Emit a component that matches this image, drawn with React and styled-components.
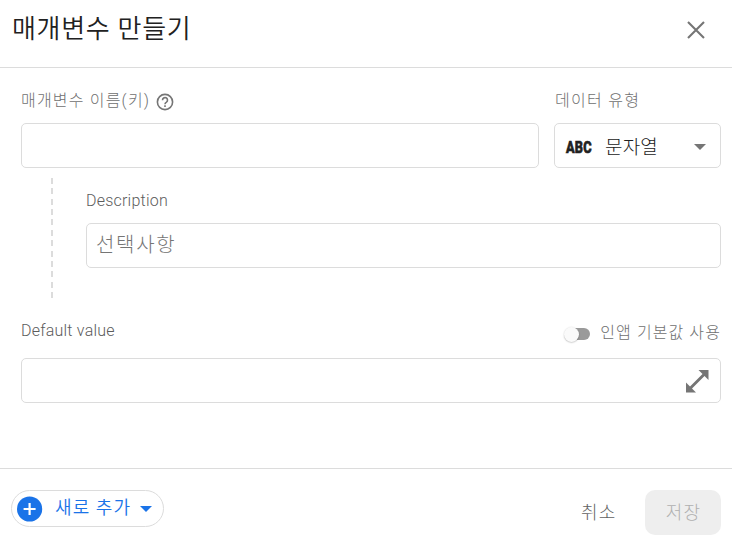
import React from "react";
import styled, { createGlobalStyle } from "styled-components";

const GlobalStyle = createGlobalStyle`
  * { box-sizing: border-box; }
  body {
    margin: 0;
    background: #fff;
    font-family: Roboto, "Noto Sans CJK KR", sans-serif;
    overflow: hidden;
  }
  button { font-family: inherit; margin: 0; padding: 0; border: 0; background: none; }
  input { font-family: inherit; }
`;

const Dialog = styled.div`
  width: 732px;
  height: 546px;
  display: flex;
  flex-direction: column;
  background: #fff;
`;

const Header = styled.header`
  height: 68px;
  flex: none;
  display: flex;
  justify-content: space-between;
  align-items: flex-start;
  padding: 9px 26px 0 12px;
  border-bottom: 1px solid #dcdcdc;
`;

const Title = styled.h1`
  margin: 0;
  font-size: 26px;
  line-height: 40px;
  font-weight: 350;
  letter-spacing: 0.7px;
  color: #212121;
`;

const CloseButton = styled.button`
  width: 20px;
  height: 20px;
  margin-top: 11px;
  display: flex;
`;

const Body = styled.main`
  height: 400px;
  flex: none;
  padding: 21px 11px 0 21px;
`;

const FieldRow = styled.div`
  display: grid;
  grid-template-columns: 518px 167px;
  column-gap: 15px;
`;

const Field = styled.div`
  display: flex;
  flex-direction: column;
`;

const LabelRow = styled.div`
  height: ${(p) => p.$height || 34}px;
  padding-left: ${(p) => p.$inset || 0}px;
  display: flex;
  align-items: flex-start;
  justify-content: space-between;
`;

const Label = styled.label`
  display: flex;
  align-items: center;
  font-size: 16px;
  line-height: 24px;
  font-weight: 300;
  letter-spacing: ${(p) => p.$spacing || 0}px;
  color: ${(p) => (p.$latin ? "#5c5c5c" : "#707070")};
  white-space: pre;
`;

const InputBox = styled.div`
  height: 45px;
  display: flex;
  align-items: center;
  justify-content: space-between;
  border: 1px solid #dcdcdc;
  border-radius: 5px;
  padding-right: 11px;
`;

const Input = styled.input`
  flex: 1;
  min-width: 0;
  height: 41px;
  border: 0;
  outline: 0;
  padding: 0 0 1px 9px;
  background: transparent;
  font-size: 20px;
  font-weight: 300;
  letter-spacing: 1.7px;
  &::placeholder { color: #757575; opacity: 1; }
`;

const Select = styled.button`
  height: 45px;
  display: flex;
  align-items: center;
  padding: 3px 14px 0 11px;
  border: 1px solid #dcdcdc;
  border-radius: 5px;
  color: #212121;
`;

const TypeMark = styled.span`
  width: 39px;
  text-align: left;
  font-size: 17px;
  line-height: 20px;
  font-weight: 800;
  letter-spacing: 0.3px;
  transform: scaleX(0.75);
  transform-origin: left center;
  -webkit-text-stroke: 0.7px #212121;
`;

const SelectValue = styled.span`
  flex: 1;
  text-align: left;
  font-size: 19px;
  line-height: 28px;
  font-weight: 300;
  letter-spacing: 0.2px;
  padding-top: 1px;
`;

const Nested = styled.section`
  display: flex;
  margin: 10px 0 0 30px;
  height: 120px;
`;

const DashedRail = styled.div`
  width: 2px;
  margin-right: 33px;
  background: repeating-linear-gradient(#dcdcdc 0 6px, transparent 6px 10.36px);
`;

const NestedField = styled(Field)`
  flex: 1;
  padding-top: 11px;
`;

const DefaultField = styled(Field)`
  padding-top: 21px;
`;

const Toggle = styled.div`
  display: flex;
  align-items: center;
  gap: 9px;
  margin-top: 2px;
`;

const Track = styled.span`
  width: 23px;
  height: 12px;
  margin: 2px 1px 0 0;
  border-radius: 6px;
  background: #9a9a9a;
  display: flex;
  align-items: center;
`;

const Thumb = styled.span`
  width: 15px;
  height: 15px;
  flex: none;
  margin-left: -3px;
  border-radius: 50%;
  background: #fafafa;
  box-shadow: 0 0.5px 1.5px rgba(0, 0, 0, 0.3);
`;

const Footer = styled.footer`
  flex: 1;
  display: flex;
  justify-content: space-between;
  align-items: flex-start;
  padding: 21px 11px 0;
  border-top: 1px solid #dcdcdc;
`;

const AddButton = styled.button`
  width: 153px;
  height: 37px;
  display: flex;
  align-items: center;
  padding: 0 11px 0 5px;
  border: 1px solid #dcdcdc;
  border-radius: 19px;
  color: #1a73e8;
`;

const AddText = styled.span`
  flex: 1;
  margin-left: 12px;
  text-align: left;
  font-size: 18px;
  line-height: 28px;
  letter-spacing: 1.1px;
  padding-bottom: 1px;
  font-weight: 350;
  white-space: nowrap;
`;

const Actions = styled.div`
  display: flex;
  gap: 30px;
`;

const ActionButton = styled.button`
  height: 45px;
  width: ${(p) => (p.$filled ? 76 : 35)}px;
  border-radius: 10px;
  background: ${(p) => (p.$filled ? "#eeeeee" : "transparent")};
  color: ${(p) => (p.$filled ? "#b0b0b0" : "#616161")};
  font-size: 18px;
  font-weight: 300;
  letter-spacing: 1.2px;
  padding: 0 0 4px 1px;
  white-space: nowrap;
`;

const HelpSvg = styled.svg`
  margin: 1px 0 0 6px;
`;

const CloseIcon = () => (
  <svg width="20" height="20" viewBox="0 0 20 20" fill="none" stroke="#757575" strokeWidth="2.1">
    <path d="M2 2 18 18M18 2 2 18" />
  </svg>
);

const HelpIcon = () => (
  <HelpSvg width="18" height="18" viewBox="0 0 18 18" fill="none" stroke="#757575" strokeWidth="1.6">
    <circle cx="9" cy="9" r="7.600" />
    <path d="M6.500 7.200A2.500 2.500 0 1 1 10.500 9.100Q9 10 9 11.200M9 12.300V13.900" />
  </HelpSvg>
);

const Caret = ({ color }) => (
  <svg width="12" height="6" viewBox="0 0 12 6" fill={color}>
    <path d="M0 0H12L6 6Z" />
  </svg>
);

const ExpandIcon = () => (
  <svg width="24" height="24" viewBox="0 0 24 24" fill="#757575">
    <path d="M13.500 1H23.500V11L19.500 7 7 19.500 11 23.500H1V13.500L5 17.500 17.500 5Z" />
  </svg>
);

const PlusIcon = () => (
  <svg width="26" height="26" viewBox="0 0 26 26">
    <circle cx="12.600" cy="13" r="12.600" fill="#1a73e8" />
    <path d="M12.600 7V19M6.600 13H18.600" stroke="#fff" strokeWidth="2.200" />
  </svg>
);

export default function App() {
  return (
    <>
      <GlobalStyle />
      <Dialog>
        <Header>
          <Title>매개변수 만들기</Title>
          <CloseButton aria-label="닫기"><CloseIcon /></CloseButton>
        </Header>
        <Body>
          <FieldRow>
            <Field>
              <LabelRow><Label $spacing={1.2}>매개변수 이름(키)<HelpIcon /></Label></LabelRow>
              <InputBox><Input /></InputBox>
            </Field>
            <Field>
              <LabelRow $inset={1}><Label $spacing={1.3}>데이터 유형</Label></LabelRow>
              <Select>
                <TypeMark>ABC</TypeMark>
                <SelectValue>문자열</SelectValue>
                <Caret color="#757575" />
              </Select>
            </Field>
          </FieldRow>
          <Nested>
            <DashedRail />
            <NestedField>
              <LabelRow><Label $latin $spacing={0.22}>Description</Label></LabelRow>
              <InputBox><Input placeholder="선택사항" /></InputBox>
            </NestedField>
          </Nested>
          <DefaultField>
            <LabelRow $height={39}>
              <Label $latin $spacing={0.22}>Default value</Label>
              <Toggle>
                <Track><Thumb /></Track>
                <Label $spacing={1.1}>인앱 기본값 사용</Label>
              </Toggle>
            </LabelRow>
            <InputBox><Input /><ExpandIcon /></InputBox>
          </DefaultField>
        </Body>
        <Footer>
          <AddButton><PlusIcon /><AddText>새로 추가</AddText><Caret color="#1a73e8" /></AddButton>
          <Actions>
            <ActionButton>취소</ActionButton>
            <ActionButton $filled disabled>저장</ActionButton>
          </Actions>
        </Footer>
      </Dialog>
    </>
  );
}
